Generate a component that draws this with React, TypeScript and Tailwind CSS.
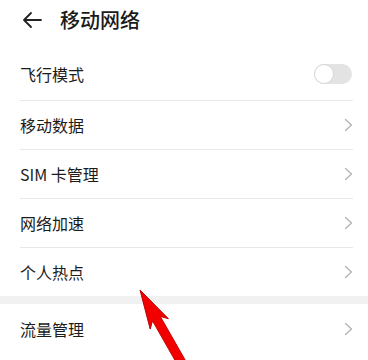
import React from "react";

const font = { fontFamily: '"Noto Sans CJK SC", "Noto Sans", sans-serif' };

function Chevron() {
  return (
    <svg width="9" height="14" viewBox="0 0 9 14" className="shrink-0">
      <polyline points="1.5,1.5 7.5,7 1.5,12.5" fill="none" stroke="#b3b3b3" strokeWidth="1.3" strokeLinecap="round" strokeLinejoin="round" />
    </svg>
  );
}

function Row({ label, h, border = true, right }: { label: string; h: string; border?: boolean; right?: React.ReactNode }) {
  return (
    <div className={`ml-5 mr-[15px] flex items-center justify-between ${h} ${border ? "border-b border-[#e8e8e8]" : ""}`}>
      <span className="text-[16px] leading-none text-[#1c1c1c] pt-[0px]">{label}</span>
      {right ?? <Chevron />}
    </div>
  );
}

export default function App() {
  return (
    <div className="relative w-[368px] h-[360px] overflow-hidden bg-white" style={font}>
      <div className="flex h-[47px] items-center pl-[22px] pb-[7px]">
        <svg width="20" height="18" viewBox="0 0 20 18" className="shrink-0">
          <path d="M19 9 H2 M9 2 L2 9 L9 16" fill="none" stroke="#222" strokeWidth="1.8" strokeLinecap="round" strokeLinejoin="round" />
        </svg>
        <span className="ml-[18px] text-[20px] leading-none font-medium text-[#1a1a1a]">移动网络</span>
      </div>
      <Row
        label="飞行模式"
        h="h-[54px]"
        right={
          <div className="mr-[1px] flex h-[20px] w-[38px] items-center rounded-full bg-[#e3e3e3]">
            <div className="h-[20px] w-[20px] rounded-full border border-[#d6d6d6] bg-white" />
          </div>
        }
      />
      <Row label="移动数据" h="h-[49px]" />
      <Row label="SIM 卡管理" h="h-[49px]" />
      <Row label="网络加速" h="h-[49px]" />
      <Row label="个人热点" h="h-[48px]" border={false} />
      <div className="h-[8px] bg-[#f1f1f1]" />
      <Row label="流量管理" h="h-[50px]" border={false} />
      <svg className="absolute left-0 top-0 pointer-events-none" width="368" height="360" viewBox="0 0 368 360">
        <polygon
          points="140,290 168.4,318.7 160.3,316.4 188.5,365.9 180.7,370.3 152.5,320.8 150.2,329.1"
          fill="#f20000"
          stroke="#c40000"
          strokeWidth="1"
          strokeLinejoin="round"
        />
      </svg>
    </div>
  );
}
